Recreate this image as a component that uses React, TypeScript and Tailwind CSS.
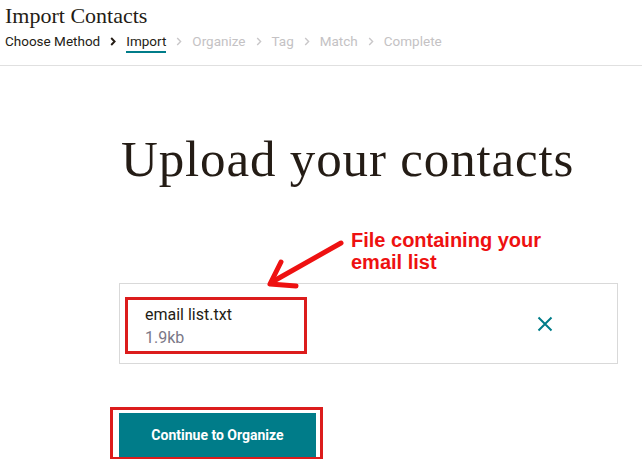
import React from "react";

const steps = [
  { label: "Choose Method", state: "done" },
  { label: "Import", state: "active" },
  { label: "Organize", state: "todo" },
  { label: "Tag", state: "todo" },
  { label: "Match", state: "todo" },
  { label: "Complete", state: "todo" },
];

const Chevron = ({ dark }: { dark: boolean }) => (
  <svg width="6" height="9" viewBox="0 0 6 9" className="mx-[10px] mt-[4px]">
    <path
      d="M1.2 1 L4.6 4.5 L1.2 8"
      fill="none"
      stroke={dark ? "#241c15" : "#c9c7c9"}
      strokeWidth={dark ? 1.9 : 1.4}
    />
  </svg>
);

const App: React.FC = () => {
  return (
    <div className="relative w-[642px] h-[459px] overflow-hidden bg-white text-[#241c15]">
      {/* header */}
      <div className="border-b border-[#e0e0e0] pl-[5px] pt-[3px] pb-[12px]">
        <h1 className="font-['Liberation_Serif',serif] text-[22px] leading-[26px]">
          Import Contacts
        </h1>
        <div className="flex items-start mt-[4px] font-['Roboto',sans-serif] text-[13.5px] leading-[16px]">
          {steps.map((s, i) => (
            <React.Fragment key={s.label}>
              {i > 0 && <Chevron dark={i <= 1} />}
              <span
                className={
                  s.state === "active"
                    ? "pb-[2px] border-b-2 border-[#007c89] text-[#241c15]"
                    : s.state === "done"
                    ? "pb-[2px] border-b-2 border-transparent text-[#241c15]"
                    : "pb-[2px] border-b-2 border-transparent text-[#c4c2c4]"
                }
              >
                {s.label}
              </span>
            </React.Fragment>
          ))}
        </div>
      </div>

      {/* main */}
      <div className="pl-[119px]">
        <h2 className="mt-[68px] font-['Liberation_Serif',serif] text-[51px] leading-[51px] tracking-[0.85px] pl-[2px]">
          Upload your contacts
        </h2>

        <div className="mt-[44px] ml-[232px] font-['Liberation_Sans',Arial,sans-serif] font-bold text-[20px] leading-[22px] text-[#ee1111]">
          File containing your
          <br />
          email list
        </div>

        <div className="mt-[10px] w-[499px] h-[81px] border border-[#d9d9d9] flex justify-between items-start pl-[5px] pt-[13px] pr-[64px]">
          <div className="w-[182px] h-[57px] border-[3px] border-[#dc1c1c] pl-[17px] pt-[3px] font-['Roboto',sans-serif] text-[16px] leading-[23px]">
            <div className="text-[#241c15]">email list.txt</div>
            <div className="text-[#7b7787]">1.9kb</div>
          </div>
          <svg width="16" height="16" viewBox="0 0 16 16" className="mt-[19px]">
            <path d="M1.5 1.5 L14.5 14.5 M14.5 1.5 L1.5 14.5" stroke="#007c89" strokeWidth="2" />
          </svg>
        </div>

        <div className="mt-[43px] -ml-[9px] w-[213px] border-[3px] border-[#dc1c1c] pl-[6px] pr-[4px] pt-[3px]">
          <button className="w-[197px] h-[44px] bg-[#007c89] text-white font-['Roboto',sans-serif] font-bold text-[14px]">
            Continue to Organize
          </button>
        </div>
      </div>

      {/* annotation arrow */}
      <svg className="absolute left-0 top-0 pointer-events-none" width="642" height="459">
        <g stroke="#ee1111" strokeWidth="5" strokeLinecap="round" strokeLinejoin="round" fill="none">
          <path d="M341 243 L272 282" />
          <path d="M281 262 L270 284 L296 286" />
        </g>
      </svg>
    </div>
  );
};

export default App;
